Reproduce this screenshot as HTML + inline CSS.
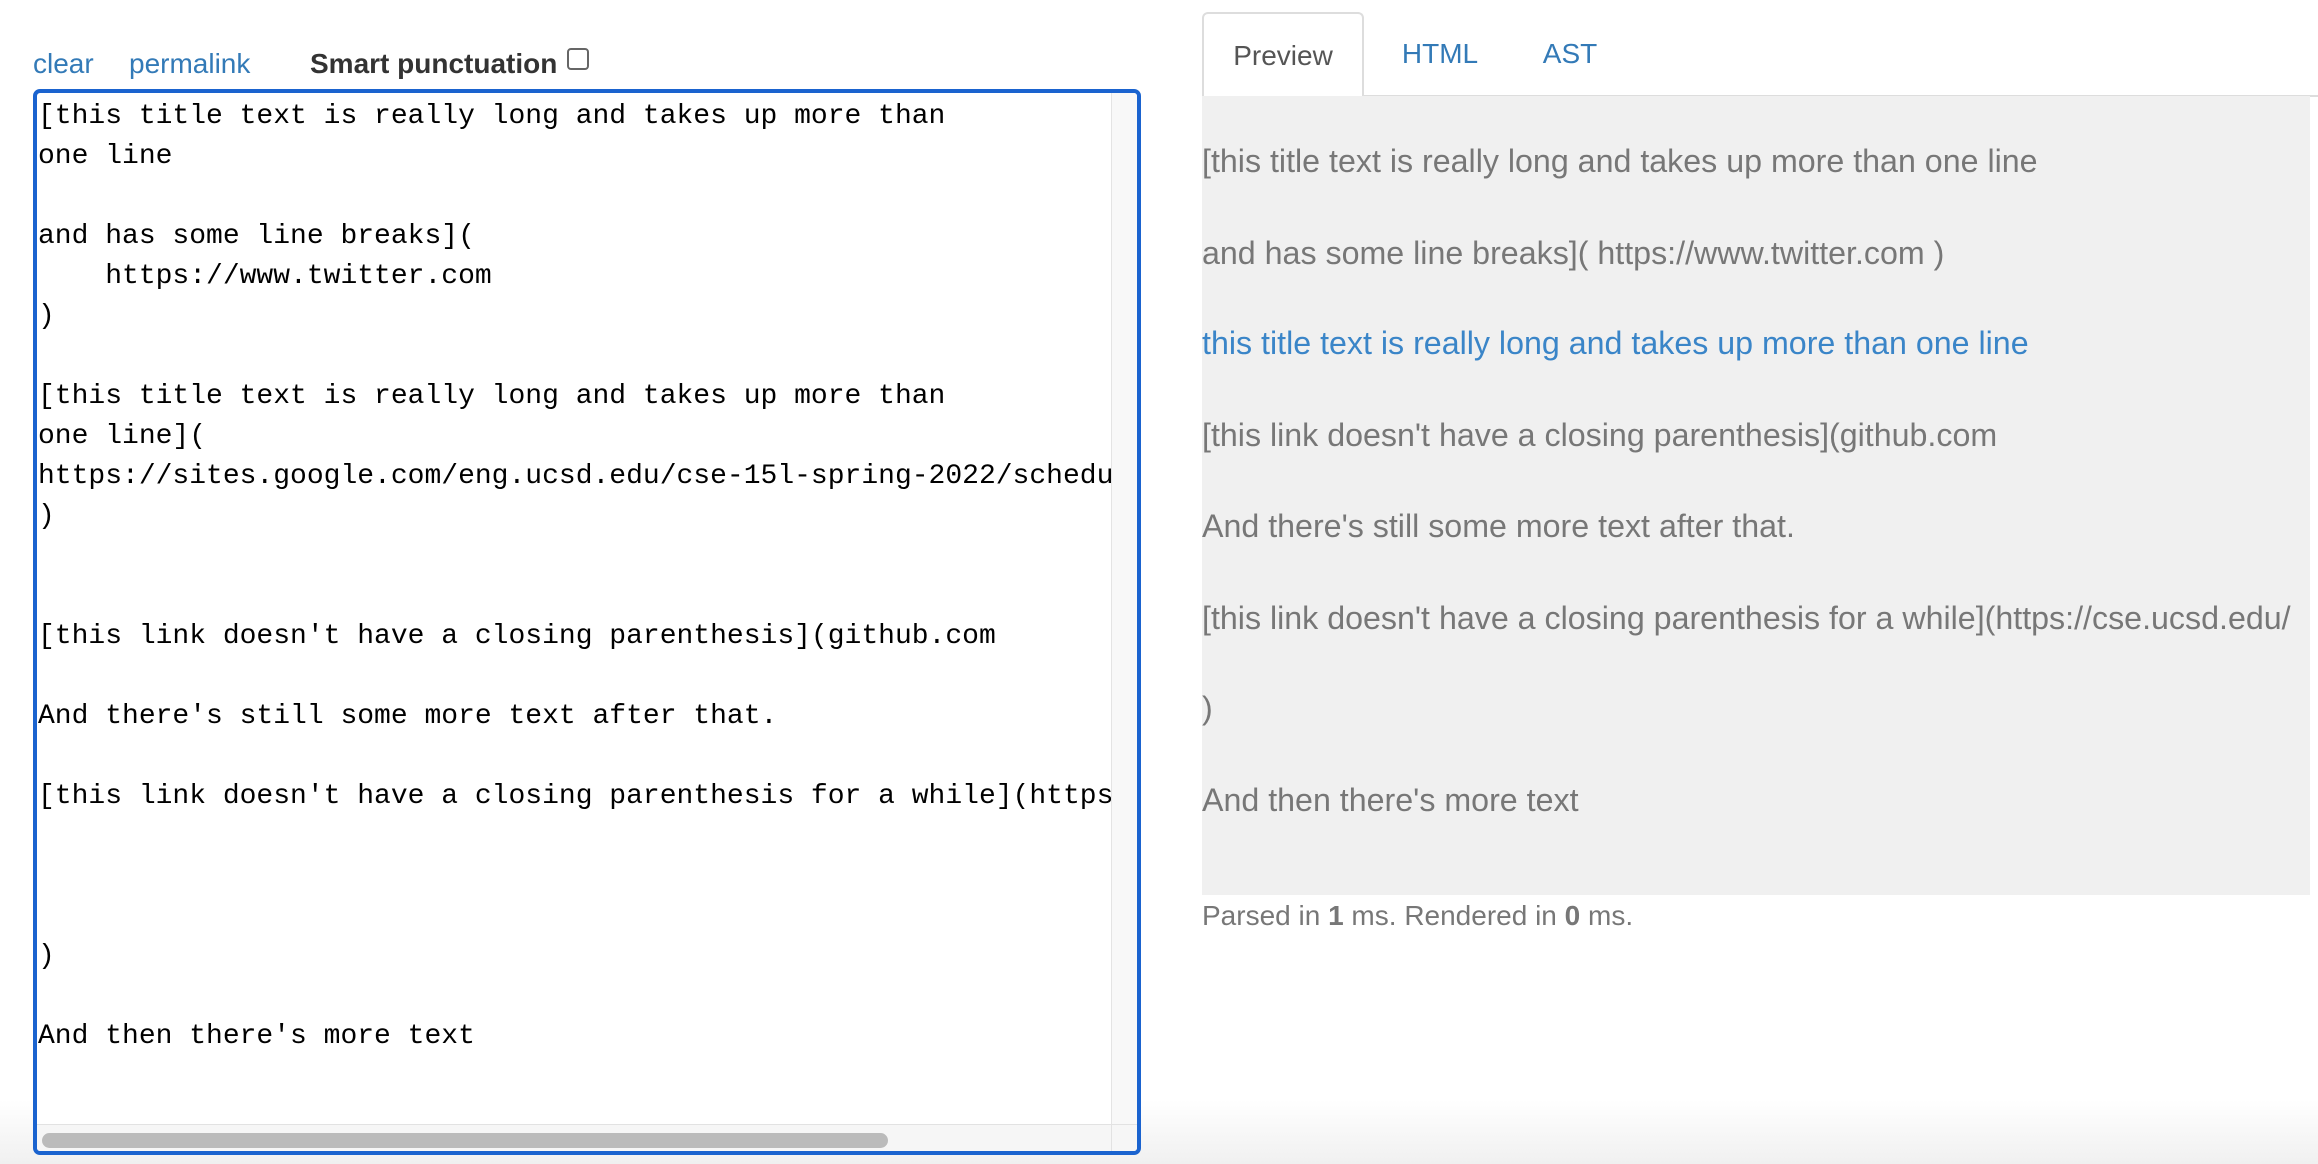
<!DOCTYPE html>
<html><head><meta charset="utf-8"><style>
html,body{margin:0;padding:0;width:2318px;height:1164px;overflow:hidden;background:linear-gradient(#fff 0,#fff 1100px,#f0f0f0 1164px);font-family:"Liberation Sans",Arial,sans-serif;position:relative}
.a{position:absolute;white-space:pre}
.lnk{color:#337ab7;font-size:28px}
#ta{position:absolute;left:33px;top:89px;width:1100px;height:1058px;border:4px solid #1a63cf;border-radius:7px;background:#fff;overflow:hidden}
#code{position:absolute;left:1px;top:4px;font-family:"Liberation Mono",monospace;font-size:28px;line-height:40px;color:#000;white-space:pre;width:1077px;overflow:hidden}
#vg{position:absolute;left:1074px;top:0;width:30px;height:1031px;background:#f8f8f8;border-left:1px solid #e4e4e4}
#hg{position:absolute;left:0;top:1031px;width:1100px;height:30px;background:#f6f6f6;border-top:1px solid #e2e2e2}
#th{position:absolute;left:5px;top:8px;width:846px;height:15px;border-radius:8px;background:#bbb}
#corner{position:absolute;left:1074px;top:1031px;width:30px;height:30px;border-left:1px solid #e2e2e2}
.tab{position:absolute;top:12px;height:84px;font-size:28px;line-height:84px;text-align:center}
#panel{position:absolute;left:1202px;top:96px;width:1108px;height:799px;background:#f0f0f0}
.p{position:absolute;left:1202px;font-size:32.2px;color:#777;white-space:pre;line-height:36px}
</style></head><body>
<div class="a lnk" style="left:33px;top:48px">clear</div>
<div class="a lnk" style="left:129px;top:48px">permalink</div>
<div class="a" style="left:310px;top:48px;font-size:28px;font-weight:bold;color:#333">Smart punctuation</div>
<div class="a" style="left:567px;top:48px;width:22px;height:22px;border:2px solid #666;border-radius:4px;box-sizing:border-box"></div>
<div id="ta">
<div id="code">[this title text is really long and takes up more than
one line

and has some line breaks](
    https://www.twitter.com
)

[this title text is really long and takes up more than
one line](
https://sites.google.com/eng.ucsd.edu/cse-15l-spring-2022/schedule
)


[this link doesn't have a closing parenthesis](github.com

And there's still some more text after that.

[this link doesn't have a closing parenthesis for a while](https://cse.ucsd.edu/



)

And then there's more text</div>
<div id="vg"></div>
<div id="hg"><div id="th"></div></div>
<div id="corner"></div>
</div>
<div style="position:absolute;left:1202px;top:95px;width:1116px;height:2px;background:#ddd"></div>
<div class="tab" style="left:1202px;width:158px;border:2px solid #ddd;border-bottom:none;border-radius:6px 6px 0 0;background:#fff;color:#555;height:84px">Preview</div>
<div class="tab" style="left:1380px;width:120px;color:#337ab7">HTML</div>
<div class="tab" style="left:1520px;width:100px;color:#337ab7">AST</div>
<div id="panel"></div>
<div class="p" style="top:143px">[this title text is really long and takes up more than one line</div>
<div class="p" style="top:235px">and has some line breaks]( https://www.twitter.com )</div>
<div class="p" style="top:325px;color:#3a85c8">this title text is really long and takes up more than one line</div>
<div class="p" style="top:417px">[this link doesn't have a closing parenthesis](github.com</div>
<div class="p" style="top:508px">And there's still some more text after that.</div>
<div class="p" style="top:600px">[this link doesn't have a closing parenthesis for a while](https://cse.ucsd.edu/</div>
<div class="p" style="top:690px">)</div>
<div class="p" style="top:782px">And then there's more text</div>
<div class="a" style="left:1202px;top:900px;font-size:28px;color:#777">Parsed in <b>1</b> ms. Rendered in <b>0</b> ms.</div>
</body></html>
